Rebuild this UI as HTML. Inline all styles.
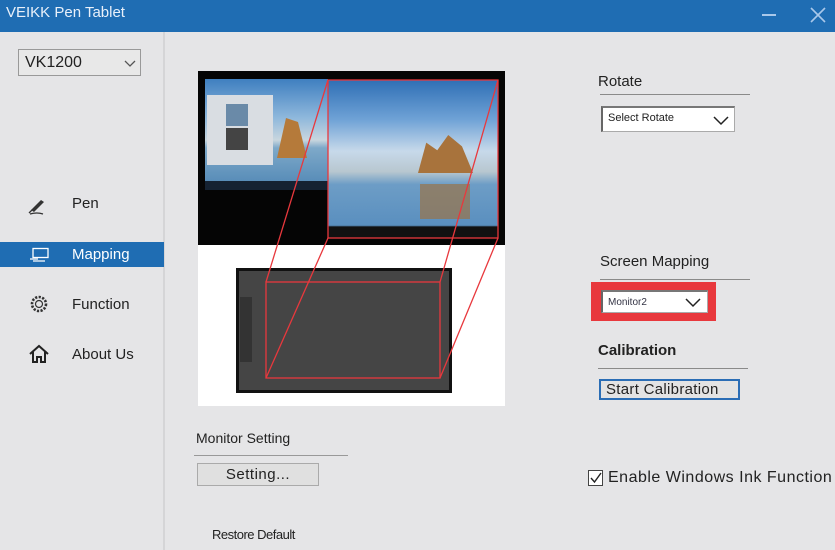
<!DOCTYPE html>
<html><head><style>
*{margin:0;padding:0;box-sizing:border-box}
body{width:835px;height:550px;background:#e5e5e7;font-family:"Liberation Sans",sans-serif;position:relative;overflow:hidden;color:#222}
.a{position:absolute}
.tb{left:0;top:0;width:835px;height:32px;background:#1f6db3;color:#e8f0fa;font-size:15px}
.side{left:0;top:32px;width:165px;height:518px;border-right:2px solid #d5d5d7;background:#e5e5e7}
.nav{font-size:15px;color:#222}
.line{height:1px;background:#8a8a8a}
.sel{background:#fff;border:1px solid #aaa;border-left:2px solid #666;border-top:2px solid #777;font-size:11px;padding:4px 0 0 5px}
</style></head><body>
<div class="a tb"><span class="a" style="left:6px;top:4px">VEIKK Pen Tablet</span>
<div class="a" style="left:762px;top:14px;width:14px;height:2px;background:#a9c8ea"></div>
<svg class="a" style="left:809px;top:6px" width="18" height="18"><path d="M2 2L16 16M16 2L2 16" stroke="#a9c8ea" stroke-width="1.6"/></svg>
</div>
<div class="a side"></div>
<div class="a" style="left:18px;top:49px;width:123px;height:27px;border:1px solid #999;background:#e8e8e8;font-size:16px;padding:4px 0 0 6px">VK1200
<svg class="a" style="left:105px;top:10px" width="12" height="8"><path d="M1 1L6 6L11 1" stroke="#555" fill="none" stroke-width="1.3"/></svg></div>

<svg class="a" style="left:27px;top:196px" width="24" height="20"><path d="M4 14L14 4L17 6L7 16Z" fill="#333"/><path d="M2 17L5 14M3 18Q10 16 16 18" stroke="#333" fill="none" stroke-width="1.3"/></svg>
<div class="a nav" style="left:72px;top:195px">Pen</div>
<div class="a" style="left:0;top:242px;width:164px;height:25px;background:#1f6db3"></div>
<svg class="a" style="left:29px;top:247px" width="22" height="16"><rect x="4" y="1.5" width="15" height="9" fill="none" stroke="#fff" stroke-width="1.3"/><path d="M1 12H9M4 14H16" stroke="#fff" stroke-width="1.2"/></svg>
<div class="a nav" style="left:72px;top:246px;color:#fff">Mapping</div>
<svg class="a" style="left:29px;top:294px" width="20" height="20"><circle cx="10" cy="10" r="3.5" fill="none" stroke="#333" stroke-width="1.2"/><circle cx="10" cy="10" r="7" fill="none" stroke="#333" stroke-width="2.6" stroke-dasharray="2.2 1.4"/></svg>
<div class="a nav" style="left:72px;top:296px">Function</div>
<svg class="a" style="left:28px;top:344px" width="22" height="20"><path d="M2 10L11 2L20 10M5 8V18H9V13H13V18H17V8" stroke="#222" fill="none" stroke-width="2"/></svg>
<div class="a nav" style="left:72px;top:346px">About Us</div>

<!-- image -->
<div class="a" style="left:198px;top:71px;width:307px;height:335px;background:#fff"></div>
<div class="a" style="left:198px;top:71px;width:307px;height:174px;background:#050505"></div>
<div class="a" style="left:205px;top:79px;width:123px;height:111px;background:linear-gradient(#3f7fc0 0%,#8fb8dc 35%,#c9d6de 55%,#7ea9c9 62%,#4f86b4 100%)"></div>
<div class="a" style="left:207px;top:95px;width:66px;height:70px;background:#d9dde2"></div>
<div class="a" style="left:226px;top:104px;width:22px;height:22px;background:#6a8aa8"></div>
<div class="a" style="left:226px;top:128px;width:22px;height:22px;background:#444"></div>
<div class="a" style="left:277px;top:118px;width:30px;height:40px;background:#b57a3a;clip-path:polygon(0 100%,30% 0,70% 10%,100% 100%)"></div>
<div class="a" style="left:205px;top:181px;width:123px;height:9px;background:#152232"></div>
<div class="a" style="left:328px;top:80px;width:170px;height:158px;background:linear-gradient(#2f6fb5 0%,#6fa2d6 25%,#c7d9ea 45%,#b8c7d0 58%,#6d9dc6 66%,#5a8fbf 92%,#111 93%)"></div>
<div class="a" style="left:418px;top:135px;width:55px;height:38px;background:#a8733c;clip-path:polygon(0 100%,15% 20%,35% 40%,55% 0,80% 30%,100% 100%)"></div>
<div class="a" style="left:420px;top:184px;width:50px;height:35px;background:#9a7447;opacity:.7"></div>
<div class="a" style="left:236px;top:268px;width:216px;height:125px;background:#454545;border:3px solid #111"></div>
<div class="a" style="left:240px;top:297px;width:12px;height:65px;background:#333"></div>
<svg class="a" style="left:198px;top:71px" width="307" height="335"><g stroke="#e8383d" stroke-width="1.3" fill="none"><rect x="130" y="9" width="170" height="158"/><rect x="68" y="211" width="174" height="96"/><path d="M130 9L68 211M130 167L68 307M300 9L242 211M300 167L242 307"/></g></svg>

<!-- right -->
<div class="a" style="left:598px;top:73px;font-size:15px">Rotate</div>
<div class="a line" style="left:600px;top:94px;width:150px"></div>
<div class="a sel" style="left:601px;top:106px;width:134px;height:26px">Select Rotate
<svg class="a" style="left:110px;top:8px" width="16" height="10"><path d="M1 1L8 8L15 1" stroke="#222" fill="none" stroke-width="1.5"/></svg></div>
<div class="a" style="left:600px;top:253px;font-size:15px">Screen Mapping</div>
<div class="a line" style="left:600px;top:279px;width:150px"></div>
<div class="a" style="left:591px;top:282px;width:125px;height:39px;background:#e8383d"></div>
<div class="a sel" style="left:601px;top:290px;width:107px;height:23px;font-size:10px;padding-top:5px;color:#334">Monitor2
<svg class="a" style="left:82px;top:6px" width="16" height="10"><path d="M1 1L8 8L15 1" stroke="#222" fill="none" stroke-width="1.5"/></svg></div>
<div class="a" style="left:598px;top:342px;font-size:15px;font-weight:bold;letter-spacing:0">Calibration</div>
<div class="a line" style="left:598px;top:368px;width:150px"></div>
<div class="a" style="left:599px;top:379px;width:141px;height:21px;border:2px solid #2a6db5;background:#e3e3e3;font-size:15px;padding:0 0 0 5px;line-height:18px;letter-spacing:0.3px">Start Calibration</div>

<div class="a" style="left:196px;top:430px;font-size:14px">Monitor Setting</div>
<div class="a line" style="left:194px;top:455px;width:154px;background:#999"></div>
<div class="a" style="left:197px;top:463px;width:122px;height:23px;border:1px solid #aaa;background:#e0e0e0;font-size:15px;text-align:center;line-height:21px;letter-spacing:0.5px">Setting...</div>
<div class="a" style="left:588px;top:470px;width:15px;height:16px;border:1px solid #444;background:#fff"></div>
<svg class="a" style="left:589px;top:471px" width="14" height="14"><path d="M2 7L5.5 11L12 2" stroke="#222" fill="none" stroke-width="1.4"/></svg>
<div class="a" style="left:608px;top:469px;font-size:16px;white-space:nowrap;letter-spacing:0.5px">Enable Windows Ink Function</div>
<div class="a" style="left:212px;top:527px;font-size:13px;letter-spacing:-0.5px">Restore Default</div>
</body></html>
